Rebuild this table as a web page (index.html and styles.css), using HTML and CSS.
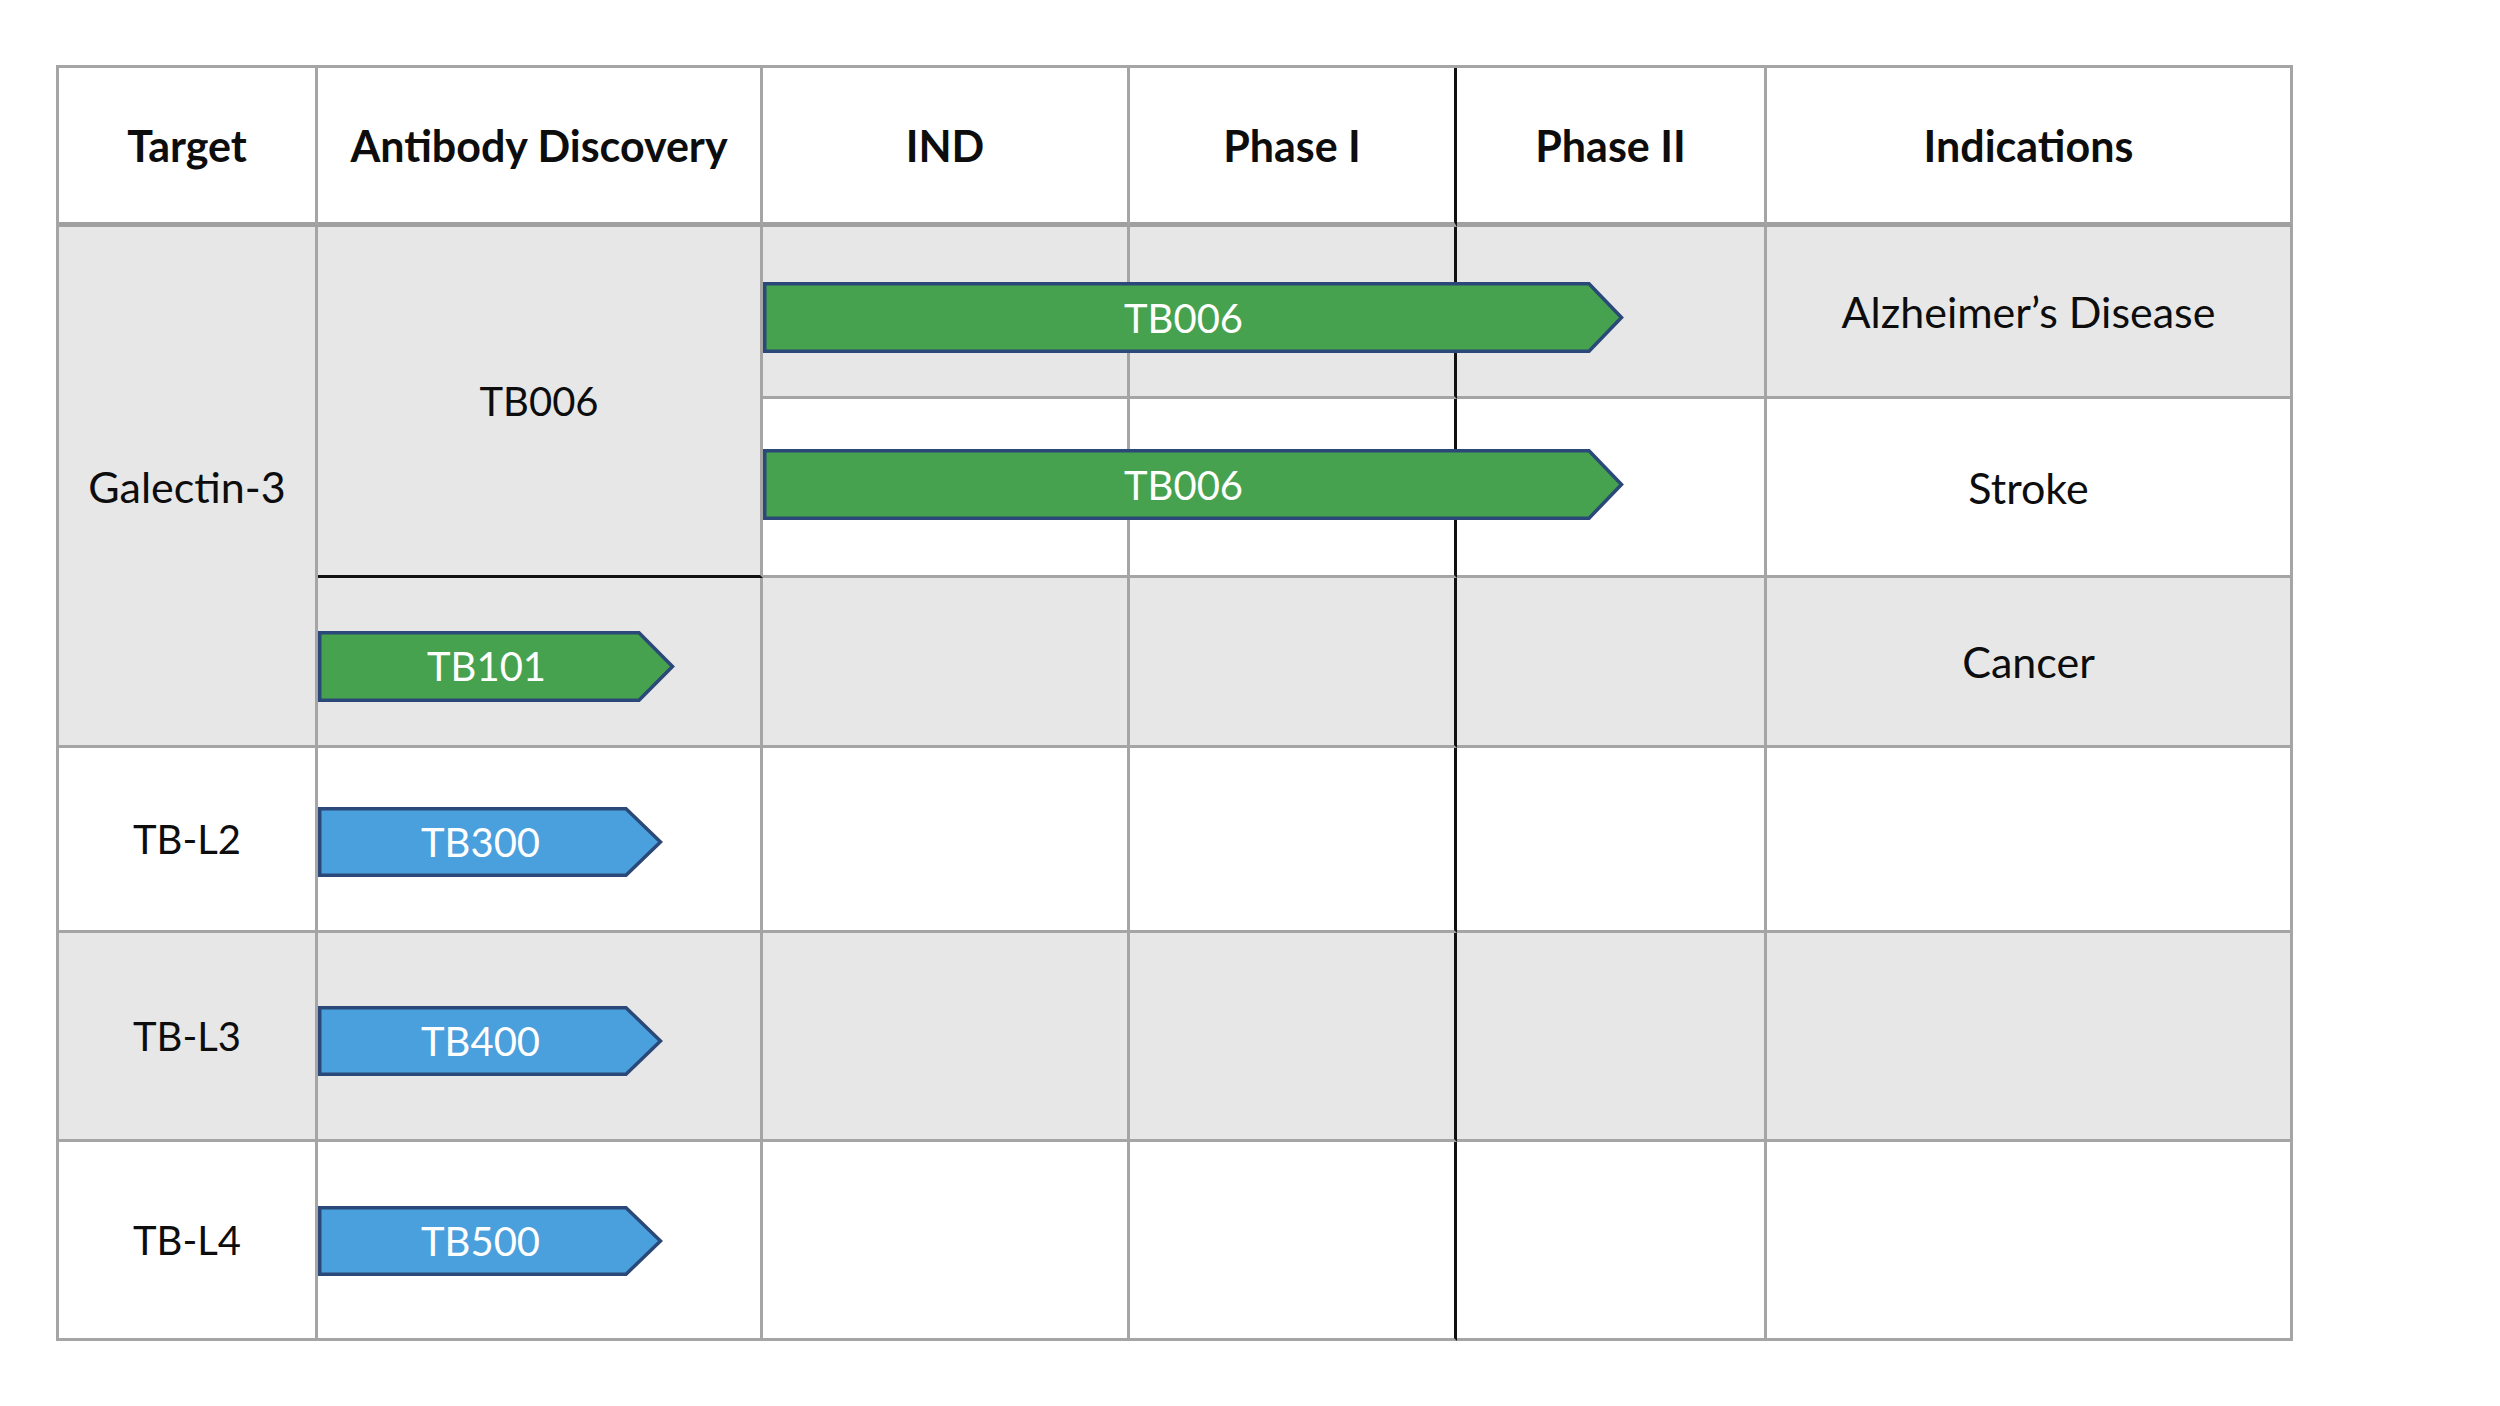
FILE: index.html
```html
<!DOCTYPE html>
<html lang="en">
<head>
<meta charset="utf-8">
<title>Pipeline</title>
<link rel="stylesheet" href="styles.css">
</head>
<body>
<div class="pipeline">
  <div class="cell head">Target</div>
  <div class="cell head">Antibody Discovery</div>
  <div class="cell head">IND</div>
  <div class="cell head split">Phase I</div>
  <div class="cell head">Phase II</div>
  <div class="cell head">Indications</div>

  <div class="cell gray target-g">Galectin-3</div>
  <div class="cell gray disc-g code">TB006</div>
  <div class="cell gray lane">
    <div class="arrow green long a-alz">
      <svg class="shape" width="861" height="71" viewBox="0 0 861 71"><polygon points="1.75,1.75 826,1.75 858.5,35.5 826,69.25 1.75,69.25"/></svg>
      <span>TB006</span>
    </div>
  </div>
  <div class="cell gray split"></div>
  <div class="cell gray"></div>
  <div class="cell gray">Alzheimer’s Disease</div>

  <div class="cell lane">
    <div class="arrow green long a-stroke">
      <svg class="shape" width="861" height="71" viewBox="0 0 861 71"><polygon points="1.75,1.75 826,1.75 858.5,35.5 826,69.25 1.75,69.25"/></svg>
      <span>TB006</span>
    </div>
  </div>
  <div class="cell split"></div>
  <div class="cell"></div>
  <div class="cell">Stroke</div>

  <div class="cell gray lane">
    <div class="arrow green mid a-101">
      <svg class="shape" width="357" height="71" viewBox="0 0 357 71"><polygon points="1.75,1.75 321,1.75 354.5,35.5 321,69.25 1.75,69.25"/></svg>
      <span>TB101</span>
    </div>
  </div>
  <div class="cell gray"></div>
  <div class="cell gray split"></div>
  <div class="cell gray"></div>
  <div class="cell gray">Cancer</div>

  <div class="cell code">TB-L2</div>
  <div class="cell lane">
    <div class="arrow blue short a-300">
      <svg class="shape" width="345" height="70" viewBox="0 0 345 70"><polygon points="1.75,1.75 308,1.75 342.5,35 308,68.25 1.75,68.25"/></svg>
      <span>TB300</span>
    </div>
  </div>
  <div class="cell"></div>
  <div class="cell split"></div>
  <div class="cell"></div>
  <div class="cell"></div>

  <div class="cell gray code">TB-L3</div>
  <div class="cell gray lane">
    <div class="arrow blue short a-400">
      <svg class="shape" width="345" height="70" viewBox="0 0 345 70"><polygon points="1.75,1.75 308,1.75 342.5,35 308,68.25 1.75,68.25"/></svg>
      <span>TB400</span>
    </div>
  </div>
  <div class="cell gray"></div>
  <div class="cell gray split"></div>
  <div class="cell gray"></div>
  <div class="cell gray"></div>

  <div class="cell code">TB-L4</div>
  <div class="cell lane">
    <div class="arrow blue short a-500">
      <svg class="shape" width="345" height="70" viewBox="0 0 345 70"><polygon points="1.75,1.75 308,1.75 342.5,35 308,68.25 1.75,68.25"/></svg>
      <span>TB500</span>
    </div>
  </div>
  <div class="cell"></div>
  <div class="cell split"></div>
  <div class="cell"></div>
  <div class="cell"></div>
</div>
</body>
</html>
```

FILE: styles.css
```css
html, body {
  margin: 0;
  padding: 0;
  background: #ffffff;
}

body {
  font-family: Lato, "Liberation Sans", sans-serif;
  color: #0d0d0d;
}

.pipeline {
  display: grid;
  grid-template-columns: 259px 445px 367px 327px 310px 526px;
  grid-template-rows: 159px 172px 179px 170px 185px 209px 199px;
  width: fit-content;
  margin: 65px 0 0 56px;
  border-left: 3px solid #a5a5a5;
  border-top: 3px solid #a5a5a5;
}

.cell {
  box-sizing: border-box;
  display: flex;
  align-items: center;
  justify-content: center;
  text-align: center;
  font-size: 43px;
  line-height: 1;
  background: #ffffff;
  border-right: 3px solid #a5a5a5;
  border-bottom: 3px solid #a5a5a5;
  white-space: nowrap;
}

.cell.code {
  font-size: 40px;
}

.cell.gray {
  background: #e7e7e7;
}

.cell.head {
  font-weight: 700;
  font-size: 43px;
  border-bottom-width: 5px;
  border-bottom-color: #a0a0a0;
}

.cell.split {
  border-right-color: #111111;
}

.cell.lane {
  justify-content: flex-start;
}

.target-g {
  grid-row: 2 / 5;
}

.disc-g {
  grid-row: 2 / 4;
  border-bottom-color: #111111;
}

.arrow {
  position: relative;
  z-index: 1;
  flex: none;
  display: flex;
  align-items: center;
  justify-content: center;
  box-sizing: border-box;
  padding-right: 20px;
  color: #ffffff;
  font-size: 40px;
  line-height: 1;
}

.arrow span {
  position: relative;
}

.arrow .shape {
  position: absolute;
  left: 0;
  top: 0;
}

.arrow polygon {
  stroke: #2a4878;
  stroke-width: 3.5;
  stroke-linejoin: miter;
}

.arrow.green polygon {
  fill: #46a24e;
}

.arrow.blue polygon {
  fill: #4aa0dd;
}

.arrow.long {
  width: 861px;
  height: 71px;
}

.arrow.mid {
  width: 357px;
  height: 71px;
}

.arrow.short {
  width: 345px;
  height: 70px;
}

.a-alz {
  margin-top: 12px;
}

.a-stroke {
  margin-bottom: 5px;
}

.a-101 {
  margin-top: 9px;
}

.a-300 {
  margin-top: 5px;
}

.a-400 {
  margin-top: 10px;
}

.a-500 {
  margin-top: 1px;
}
```
